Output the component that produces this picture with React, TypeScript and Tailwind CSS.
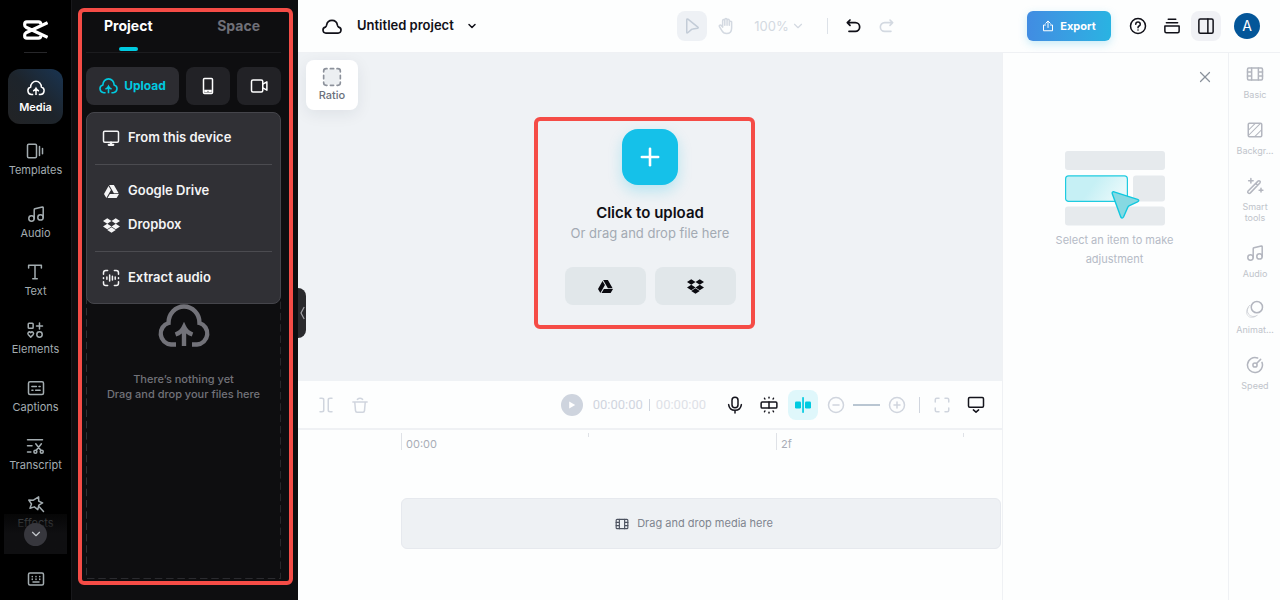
import React from "react";
import { FaDropbox, FaGoogleDrive } from "react-icons/fa";
import { ChevronDown, Plus, X } from "lucide-react";

type IconProps = { className?: string; children: React.ReactNode; sw?: number };

function Icon({ className = "size-5", children, sw = 2 }: IconProps) {
  return (
    <svg
      viewBox="0 0 24 24"
      className={className}
      fill="none"
      stroke="currentColor"
      strokeWidth={sw}
      strokeLinecap="round"
      strokeLinejoin="round"
      aria-hidden="true"
    >
      {children}
    </svg>
  );
}

function CloudUpload({ className }: { className: string }) {
  return (
    <svg viewBox="0 0 52 44" className={className} fill="none" stroke="currentColor" strokeWidth="4.4" aria-hidden="true">
      <path d="M18 40.5H13A11 11 0 0 1 10.5 19A15.5 16.5 0 0 1 41.5 19A11 11 0 0 1 39 40.5H34" />
      <path d="M26 42V24M17.5 30.5Q23.5 28.5 26 23Q28.5 28.5 34.5 30.5" />
    </svg>
  );
}

function Logo() {
  return (
    <svg viewBox="0 0 25 20" className="h-5 w-[25px]" fill="none" stroke="#fff" strokeWidth="3.2" aria-hidden="true">
      <path d="M24.6 2.6L3 12.8Q1.7 13.5 1.7 15V16Q1.7 18.2 3.8 18.2H15.5Q17.7 18.2 17.9 15.6" />
      <path d="M24.6 17.4L3 7.2Q1.7 6.5 1.7 5V4Q1.7 1.8 3.8 1.8H15.5Q17.7 1.8 17.9 4.4" />
    </svg>
  );
}

const Music = ({ className }: { className?: string }) => (
  <Icon className={className}>
    <circle cx="6" cy="18" r="3.6" />
    <circle cx="18" cy="16.5" r="3.6" />
    <path d="M9.6 18V6.4Q9.6 5.4 10.6 5.1L20.4 2.6Q21.6 2.4 21.6 3.5V16.5" />
  </Icon>
);

const Film = ({ className }: { className?: string }) => (
  <Icon className={className}>
    <rect x="2" y="4" width="20" height="16" rx="1.6" />
    <path d="M7.5 4V20M16.5 4V20M2 9.3H7.5M2 14.7H7.5M16.5 9.3H22M16.5 14.7H22" />
  </Icon>
);

const navItems = [
  {
    label: "Templates",
    gap: "mt-[17px]",
    icon: (
      <Icon>
        <rect x="2" y="3" width="12" height="18" rx="1.6" />
        <path d="M18 6V18M22 8.5V15.5" />
      </Icon>
    ),
  },
  { label: "Audio", gap: "mt-[25px]", icon: <Music className="size-5" /> },
  {
    label: "Text",
    gap: "mt-5",
    icon: (
      <Icon>
        <path d="M3.5 6.5V3H20.5V6.5M12 3V21M9 21H15" />
      </Icon>
    ),
  },
  {
    label: "Elements",
    gap: "mt-5",
    icon: (
      <Icon>
        <rect x="3" y="3" width="6.5" height="6.5" rx="1" />
        <path d="M18 2.5V10.5M14 6.5H22M6.3 21.5L3.2 18.4Q1.8 16.6 3.2 15.1Q4.8 13.8 6.3 15.6Q7.8 13.8 9.4 15.1Q10.8 16.6 9.4 18.4Z" />
        <circle cx="18" cy="18" r="3.6" />
      </Icon>
    ),
  },
  {
    label: "Captions",
    gap: "mt-5",
    icon: (
      <Icon>
        <rect x="2" y="3.5" width="20" height="17" rx="2" />
        <path d="M6.5 10H12.5M16 10H17.5M6.5 15H8M11.5 15H17.5" />
      </Icon>
    ),
  },
  {
    label: "Transcript",
    gap: "mt-5",
    icon: (
      <Icon>
        <path d="M2 3.5H22M2 11.5H8M2 20H6.5M13 9L20 18M20.5 9L13.5 18" />
        <circle cx="12.5" cy="19.5" r="2" />
        <circle cx="21" cy="19.5" r="2" />
      </Icon>
    ),
  },
  {
    label: "Effects",
    gap: "mt-5",
    icon: (
      <Icon>
        <path d="M15.5 2.5L15.6 8.2L20.8 10.6L15.8 13.4L14.4 19.5L9.8 15.8L4 17.6L6 12L2.4 6.8L8.6 6.9ZM16.5 16L22 22" />
      </Icon>
    ),
  },
];

function NavRail() {
  return (
    <nav className="flex w-[71px] shrink-0 flex-col bg-black text-[#a3acb0]">
      <div className="relative min-h-0 flex-1">
        <div className="flex h-full flex-col items-center overflow-hidden pt-5">
          <Logo />
          <div className="mt-3 h-px w-[23px] shrink-0 bg-[#27272a]" />
          <button className="mt-4 flex h-[55px] w-[55px] shrink-0 flex-col items-center justify-center rounded-xl bg-linear-to-bl from-[#183452] via-[#1d242b] to-[#222325] pt-0.5 text-white">
            <CloudUpload className="h-4 w-[18px]" />
            <span className="mt-0.5 text-[11px] leading-[18px] font-semibold">Media</span>
          </button>
          {navItems.map((n) => (
            <button key={n.label} className={`flex shrink-0 flex-col items-center ${n.gap}`}>
              <span className="flex h-5 items-center justify-center [&>svg]:size-[18px]">{n.icon}</span>
              <span className="text-[11px] leading-[18px]">{n.label}</span>
            </button>
          ))}
        </div>
        <div className="absolute right-1 bottom-0 left-1 flex h-10 items-center justify-center bg-linear-to-b from-[#0a0a0b]/60 to-[#0f0f11] to-50%">
          <button aria-label="Show more" className="flex size-[23px] items-center justify-center rounded-full bg-[#37373d] text-[#c5c8cc]">
            <ChevronDown className="size-3.5" />
          </button>
        </div>
      </div>
      <div className="flex h-[46px] shrink-0 items-center justify-center pt-1">
        <button aria-label="Keyboard shortcuts">
          <Icon className="size-[18px]">
            <rect x="2" y="4" width="20" height="16" rx="2" />
            <path d="M7 8.5V9M12 8.5V9M17 8.5V9M7 12V12.5M12 12V12.5M17 12V12.5M8 16H16" />
          </Icon>
        </button>
      </div>
    </nav>
  );
}

function MenuItem({ icon, label }: { icon: React.ReactNode; label: string }) {
  return (
    <button role="menuitem" className="flex h-[34px] w-full items-center gap-2 px-[15px] text-[13px] font-semibold text-[#f4f4f5]">
      <span className="flex w-[18px] justify-center">{icon}</span>
      {label}
    </button>
  );
}

function MediaPanel() {
  return (
    <aside className="relative flex w-[227px] shrink-0 flex-col border-l border-[#18181b] bg-[#0e0e10] pr-[17px] pb-[21px] pl-[14px]">
      <div role="tablist" className="flex h-[53px] shrink-0 justify-between border-b border-[#1c1c1f] pr-[21px] pl-[18px] text-sm font-bold">
        <button role="tab" aria-selected="true" className="flex flex-col items-center pt-4 text-white">
          <span className="leading-5">Project</span>
          <span className="mt-[11px] h-1 w-[19px] rounded-sm bg-[#00cae0]" />
        </button>
        <button role="tab" aria-selected="false" className="flex flex-col pt-4 leading-5 text-[#707078]">Space</button>
      </div>
      <div className="relative flex min-h-0 flex-1 flex-col pt-[14px]">
        <div className="flex h-[38px] shrink-0 gap-[7px]">
          <button className="flex w-[93px] items-center justify-center gap-1.5 rounded-lg bg-[#2c2c31] text-[12px] font-bold text-[#00cae0]">
            <CloudUpload className="h-4 w-[19px]" />
            Upload
          </button>
          <button aria-label="Upload from phone" className="flex flex-1 items-center justify-center rounded-lg bg-[#222226] text-white">
            <Icon className="size-[18px]">
              <rect x="6" y="2" width="12" height="20" rx="1.4" />
              <path d="M7 18.8H17" strokeWidth="3.6" strokeLinecap="butt" />
              <circle cx="12" cy="19" r=".8" fill="#222226" stroke="none" />
            </Icon>
          </button>
          <button aria-label="Record" className="flex flex-1 items-center justify-center rounded-lg bg-[#222226] text-white">
            <Icon className="size-[18px]">
              <rect x="2" y="4" width="15" height="16" rx="2" />
              <path d="M17 9.5L22.5 6.5V17.5L17 14.5" />
            </Icon>
          </button>
        </div>
        <div className="relative flex-1">
          <div className="absolute inset-x-0 top-10 bottom-0">
            <svg className="size-full" aria-hidden="true">
              <rect x="0.5" y="0.5" width="99.6%" height="99.8%" fill="none" stroke="#303034" strokeDasharray="7.5 3.8" />
            </svg>
          </div>
          <div className="flex flex-col items-center pt-[199px] text-center text-[11px] leading-[15px] font-medium text-[#727279]">
            <CloudUpload className="h-11 w-[52px]" />
            <p className="mt-6">There’s nothing yet</p>
            <p>Drag and drop your files here</p>
          </div>
        </div>
        <div role="menu" className="absolute inset-x-0 top-[59px] rounded-lg border border-[#45454b] bg-[#303035] py-2">
          <MenuItem
            label="From this device"
            icon={
              <Icon className="size-[18px]">
                <rect x="2" y="3" width="20" height="14.5" rx="1.6" />
                <path d="M9 21H15M12 18V21" strokeWidth="3" />
              </Icon>
            }
          />
          <hr className="mx-2 my-[9px] border-[#4b4b50]" />
          <MenuItem label="Google Drive" icon={<FaGoogleDrive className="size-[15px]" />} />
          <MenuItem label="Dropbox" icon={<FaDropbox className="size-[17px]" />} />
          <hr className="mx-2 my-[9px] border-[#4b4b50]" />
          <MenuItem
            label="Extract audio"
            icon={
              <Icon className="size-[18px]">
                <path d="M2 7V5Q2 2 5 2H7.5M16.5 2H19Q22 2 22 5V7M22 17V19Q22 22 19 22H16.5M7.5 22H5Q2 22 2 19V17M2 11.5V12.5M22 11.5V12.5M6.5 10.5V13.5M10.2 8V16M13.9 9.5V14.5M17.6 10.5V13.5" />
              </Icon>
            }
          />
        </div>
      </div>
      <div className="pointer-events-none absolute top-2 right-[5px] bottom-[15px] left-[6px] rounded-md border-4 border-[#f54c46]" />
      <button aria-label="Collapse panel" className="absolute top-[288px] -right-2 z-10 flex h-[50px] w-2 items-center justify-center rounded-r-lg bg-[#2a2a2d] text-[#a1a1a6]">
        <svg viewBox="0 0 5 14" className="h-3.5 w-[5px]" fill="none" stroke="currentColor" strokeWidth="1.2" aria-hidden="true">
          <path d="M4.2 1L1 7L4.2 13" />
        </svg>
      </button>
    </aside>
  );
}

function Header() {
  return (
    <header className="grid h-[53px] shrink-0 grid-cols-[1fr_auto_1fr] items-center border-b border-[#eff1f4] bg-[#fdfefe] pr-5 pl-6 text-[#101018]">
      <div className="flex items-center">
        <Icon className="size-5">
          <path d="M5 20.5H19A3.6 3.6 0 0 0 20 13.4Q18.9 12.8 18.5 11A6.6 7 0 0 0 5.5 11Q5.1 12.8 4 13.4A3.6 3.6 0 0 0 5 20.5Z" />
        </Icon>
        <button className="ml-[15px] flex items-center gap-3 text-[13px] font-semibold">
          Untitled project
          <ChevronDown className="size-3" strokeWidth={3} />
        </button>
      </div>
      <div className="mr-2 flex items-center text-[#d3d9e1]">
        <button aria-label="Select" className="flex size-[30px] items-center justify-center rounded-lg bg-[#eef1f5] text-[#c3ccd7]">
          <Icon className="size-[18px]">
            <path d="M5 3.5V20.5Q5.2 21.8 6.3 21L11.5 16.5Q12 16 13 15.9L19.5 15Q21 14.6 19.8 13.5L6.6 2.8Q5.2 2 5 3.5Z" />
          </Icon>
        </button>
        <button aria-label="Hand" className="ml-[9px] flex size-5 items-center justify-center">
          <Icon className="size-[18px]">
            <path d="M7.5 13.5V5Q7.5 3.4 8.9 3.4T10.4 5V11V3.5Q10.4 2 11.9 2T13.4 3.5V11V4.5Q13.4 3 14.9 3T16.4 4.5V11V7Q16.4 5.5 18 5.5T19.5 7V14.5Q19.5 22 12.8 22Q8.5 22 6.7 18.5L3.2 12.8Q2.6 11.4 3.7 10.9Q4.9 10.3 6 11.6Z" />
          </Icon>
        </button>
        <button className="ml-[18px] flex items-center gap-0.5 text-[13px] leading-5">
          100%
          <ChevronDown className="size-[14px]" />
        </button>
        <span className="mr-[15px] ml-[22px] h-4 w-px bg-[#dde2e8]" />
        <button aria-label="Undo" className="flex size-5 items-center justify-center text-[#101018]">
          <Icon className="size-4" sw={2.6}>
            <path d="M7.5 3L3.5 7L7.5 11M4 7H15.5A6.5 6.5 0 0 1 15.5 20H6" />
          </Icon>
        </button>
        <button aria-label="Redo" className="ml-[14px] flex size-5 items-center justify-center">
          <Icon className="size-4" sw={2.4}>
            <path d="M16.5 3L20.5 7L16.5 11M20 7H8.5A6.5 6.5 0 0 0 8.5 20H18" />
          </Icon>
        </button>
      </div>
      <div className="flex items-center justify-end">
        <button className="flex h-[30px] w-[84px] items-center justify-center gap-1.5 rounded-md bg-linear-to-r from-[#418ce2] to-[#29b3e2] text-[11px] font-bold text-white shadow-[0_3px_8px_rgba(41,179,226,0.25)]">
          <Icon className="size-3">
            <path d="M12 15V2.5M7.5 6.5L12 2L16.5 6.5M7 10H3V21.5H21V10H17" />
          </Icon>
          Export
        </button>
        <button aria-label="Help" className="ml-[18px]">
          <Icon className="size-[18px]">
            <circle cx="12" cy="12" r="10" />
            <path d="M9 9.6Q9.2 6.8 12 6.8T15 9.5Q15 11 13.4 12Q12 12.9 12 14.2M12 17.2V17.4" />
          </Icon>
        </button>
        <button aria-label="Tasks" className="ml-4">
          <Icon className="size-[18px]">
            <path d="M7 3H17M4.5 7.5H19.5M2.5 12H21.5V19Q21.5 21 19.5 21H4.5Q2.5 21 2.5 19Z" />
          </Icon>
        </button>
        <button aria-label="Toggle side panel" className="ml-[10px] flex size-[30px] items-center justify-center rounded-lg bg-[#f0f1f5]">
          <Icon className="size-[18px]">
            <rect x="2.5" y="2.5" width="19" height="19" rx="2" />
            <path d="M14.5 2.5V21.5" />
          </Icon>
        </button>
        <button aria-label="Account" className="ml-[13px] flex size-[26px] items-center justify-center rounded-full bg-[#045699] text-sm text-white">
          A
        </button>
      </div>
    </header>
  );
}

function Stage() {
  return (
    <section className="relative flex min-h-0 flex-1 justify-center bg-[#eff2f5]">
      <button className="absolute top-[7px] left-2 flex h-[50px] w-[52px] flex-col items-center rounded-lg bg-white pt-[7px] text-[11px] leading-[17px] font-medium text-[#6b6f7b] shadow-[0_4px_16px_rgba(30,40,60,0.08)]">
        <Icon className="size-5">
          <rect x="3" y="3" width="18" height="18" rx="2" fill="#eceff2" stroke="none" />
          <path
            d="M2 6V5Q2 2 5 2H6M18 2H19Q22 2 22 5V6M22 18V19Q22 22 19 22H18M6 22H5Q2 22 2 19V18M10 2H14M10 22H14M2 10V14M22 10V14"
            stroke="#8c919b"
          />
        </Icon>
        Ratio
      </button>
      <div className="relative mt-[76px] flex h-fit flex-col items-center">
        <button aria-label="Click to upload" className="flex size-14 items-center justify-center rounded-2xl bg-[#15c1e9] text-white shadow-[0_6px_14px_rgba(21,193,233,0.25)]">
          <Plus className="size-7" strokeWidth={2.2} />
        </button>
        <p className="mt-[18px] text-[15px] leading-5 font-semibold text-[#0e0e14]">Click to upload</p>
        <p className="text-[13px] leading-5 text-[#a3aab3]">Or drag and drop file here</p>
        <div className="mt-6 flex gap-[9px] text-[#0a0a10]">
          <button aria-label="Google Drive" className="flex h-[38px] w-[81px] items-center justify-center rounded-lg bg-[#e1e7ea]">
            <FaGoogleDrive className="size-[15px]" />
          </button>
          <button aria-label="Dropbox" className="flex h-[38px] w-[81px] items-center justify-center rounded-lg bg-[#e1e7ea]">
            <FaDropbox className="size-[17px]" />
          </button>
        </div>
        <div className="pointer-events-none absolute -top-3 -right-[19px] -bottom-6 -left-[31px] rounded-md border-4 border-[#f54c46]" />
      </div>
    </section>
  );
}

function PlaybackBar() {
  return (
    <div className="flex h-[49px] shrink-0 items-center justify-between border-b-2 border-[#eff1f4] pt-px pr-[17px] pl-[18px] text-[#d0d5de]">
      <div className="flex items-center gap-[14px]">
        <button aria-label="Split" className="flex size-5 items-center justify-center">
          <Icon className="size-[18px]">
            <path d="M4 3H6.5Q9 3 9 5V19Q9 21 6.5 21H4M20 3H17.5Q15 3 15 5V19Q15 21 17.5 21H20" />
          </Icon>
        </button>
        <button aria-label="Delete" className="flex size-5 items-center justify-center">
          <Icon className="size-[18px]">
            <path d="M2.5 8H21.5M5 8L6 19.5Q6.2 21.5 8 21.5H16Q17.8 21.5 18 19.5L19 8M8.5 4.5Q12 1.5 15.5 4.5" />
          </Icon>
        </button>
      </div>
      <div className="flex items-center">
        <button aria-label="Play" className="flex size-[22px] items-center justify-center rounded-full bg-[#ced4de]">
          <svg viewBox="0 0 8 8" className="size-2" aria-hidden="true">
            <path d="M1.2 .6L7.2 4L1.2 7.4Z" fill="#fff" />
          </svg>
        </button>
        <span className="ml-[10px] flex items-center gap-1.5 font-[Roboto,'Liberation_Sans',sans-serif] text-[13px]">
          <span>00:00:00</span>
          <span className="h-3 w-px bg-[#ced4de]" />
          <span className="text-[#dde1e7]">00:00:00</span>
        </span>
        <button aria-label="Record voice" className="ml-5 text-[#14141c]">
          <Icon className="size-[18px]">
            <rect x="8" y="1.5" width="8" height="14" rx="4" />
            <path d="M3.5 11.5Q4.5 19 12 19T20.5 11.5M12 19V22.5" />
          </Icon>
        </button>
        <button aria-label="Split scenes" className="ml-4 text-[#14141c]">
          <Icon className="size-[18px]">
            <rect x="1.5" y="8" width="21" height="8" rx="1.5" />
            <path d="M12 8V16M12 1.5V2.5M12 21.5V22.5M6 3L6.5 4M18 3L17.5 4M6 21L6.5 20M18 21L17.5 20" />
          </Icon>
        </button>
        <button aria-label="Auto snapping" className="ml-[10px] flex size-[30px] items-center justify-center rounded-lg bg-[#dff7fb] text-[#00cae0]">
          <svg viewBox="0 0 18 18" className="size-[18px]" fill="currentColor" aria-hidden="true">
            <rect x="1" y="5.5" width="6" height="7" rx="1.2" />
            <rect x="11" y="5.5" width="6" height="7" rx="1.2" />
            <rect x="8.2" y="1" width="1.7" height="16" rx=".8" />
          </svg>
        </button>
        <button aria-label="Zoom out" className="ml-[9px]">
          <Icon className="size-[18px]">
            <circle cx="12" cy="12" r="10" />
            <path d="M8 12H16" />
          </Icon>
        </button>
        <span className="mx-2 h-0.5 w-[27px] bg-[#b9c6d2]" />
        <button aria-label="Zoom in">
          <Icon className="size-[18px]">
            <circle cx="12" cy="12" r="10" />
            <path d="M8 12H16M12 8V16" />
          </Icon>
        </button>
        <span className="mx-[13px] h-4 w-px bg-[#d0d5de]" />
        <button aria-label="Fit timeline">
          <Icon className="size-[18px]">
            <path d="M3 8V5Q3 3 5 3H8M16 3H19Q21 3 21 5V8M21 16V19Q21 21 19 21H16M8 21H5Q3 21 3 19V16" />
          </Icon>
        </button>
        <button aria-label="Preview settings" className="ml-4 text-[#14141c]">
          <Icon className="size-[18px]">
            <rect x="2" y="2" width="20" height="13" rx="1.6" />
            <path d="M8.5 18.5L12 21.5L15.5 18.5" />
          </Icon>
        </button>
      </div>
    </div>
  );
}

const ticks = ["00:00", "", "2f", ""];

function Timeline() {
  return (
    <section className="h-[219px] shrink-0 bg-[#fdfefe]">
      <PlaybackBar />
      <div className="pt-[3px] pl-[103px]">
        <div className="flex text-[11px] text-[#a8adb7]">
          {ticks.map((t, i) => (
            <div
              key={i}
              className={
                i === 3
                  ? "h-1 flex-1 border-l border-[#dfe2e7]"
                  : t
                    ? "h-[17px] w-[187px] border-l border-[#dfe2e7] pl-1 leading-[22px]"
                    : "h-1 w-[188px] border-l border-[#dfe2e7]"
              }
            >
              {t}
            </div>
          ))}
        </div>
        <div className="mt-12 mr-px flex h-[51px] items-center justify-center gap-2 rounded-md border border-[#e6e9ee] bg-[#eef1f4] pr-[14px] text-[11px] text-[#7f858f]">
          <Film className="size-[14px] text-[#4d5360]" />
          Drag and drop media here
        </div>
      </div>
    </section>
  );
}

const tools = [
  { label: "Basic", icon: <Film className="size-[18px]" /> },
  {
    label: "Backgr…",
    icon: (
      <Icon className="size-[18px]">
        <rect x="3" y="3" width="18" height="18" rx="1.6" />
        <path d="M3.5 12L12 3.5M3.5 19L19 3.5M12 20.5L20.5 12" strokeWidth="1.4" />
      </Icon>
    ),
  },
  {
    label: "Smart tools",
    icon: (
      <Icon className="size-[18px]">
        <path d="M2.5 19L16 5.5Q17.3 4.5 18.5 5.5T18.5 8L5.5 21.5Q4.2 22.3 3 21.3T2.5 19ZM13 8.5L15.5 11M6.5 2V8M3.5 5H9.5M20 15V20M17.5 17.5H22.5" />
      </Icon>
    ),
  },
  { label: "Audio", icon: <Music className="size-[18px]" /> },
  {
    label: "Animat…",
    icon: (
      <Icon className="size-[18px]">
        <path d="M5 7A8 8 0 1 0 15 20.5" strokeWidth="1.3" opacity=".6" />
        <path d="M3.5 10A7 7 0 0 0 12.5 22" strokeWidth="1.3" opacity=".4" />
        <circle cx="14.5" cy="9.5" r="7.5" />
      </Icon>
    ),
  },
  {
    label: "Speed",
    icon: (
      <Icon className="size-[18px]">
        <path d="M15.5 2.7A10 10 0 1 0 21.3 8.5M14 10L19.5 4.5" />
        <circle cx="12" cy="12" r="2.8" />
      </Icon>
    ),
  },
];

function Inspector() {
  return (
    <aside className="flex w-[226px] shrink-0 flex-col border-l border-[#eff1f4]">
      <button aria-label="Close" className="mt-[15px] mr-[14px] self-end text-[#8a929c]">
        <X className="size-[18px]" strokeWidth={1.6} />
      </button>
      <div className="mt-[65px] flex flex-col items-center pr-0.5">
        <svg viewBox="0 0 100 75" className="h-[75px] w-[100px]" aria-hidden="true">
          <defs>
            <linearGradient id="card" x1="0" y1="0" x2="1" y2="0.3">
              <stop offset="0.5" stopColor="#c6f0f5" />
              <stop offset="1" stopColor="#e6f8fa" />
            </linearGradient>
          </defs>
          <rect x="0" y="0" width="100" height="19" rx="3" fill="#e6eaed" />
          <rect x="68" y="24.5" width="32" height="26" rx="3" fill="#e6eaed" />
          <rect x="0" y="55.5" width="100" height="19" rx="3" fill="#e6eaed" />
          <rect x=".6" y="24.9" width="61.8" height="25.5" rx="3" fill="url(#card)" stroke="#1ecbe0" strokeWidth="1.2" />
          <path
            d="M49 40.8L72.5 48.4Q75 49.5 72.5 50.9L64.5 54.6Q63.3 55.2 62.8 56.2L58.5 66Q57.2 68.2 55.8 66L47.2 42.5Q47 40.3 49 40.8Z"
            fill="#86d9e2"
            stroke="#12c8df"
            strokeWidth="1.4"
            strokeLinejoin="round"
          />
        </svg>
        <p className="mt-[5px] w-32 text-center text-[11px] leading-[19px] text-[#b5bbc6]">Select an item to make adjustment</p>
      </div>
    </aside>
  );
}

function ToolRail() {
  return (
    <nav className="flex w-[52px] shrink-0 flex-col items-center gap-[21px] border-l border-[#eff1f4] pt-3 pl-px text-[#b3b6bf]">
      {tools.map((t) => (
        <button key={t.label} className="flex w-[42px] flex-col items-center">
          {t.icon}
          <span className="mt-1.5 text-[9px] leading-[11px] text-[#c0c4cb]">{t.label}</span>
        </button>
      ))}
    </nav>
  );
}

export default function App() {
  return (
    <div className="flex h-screen overflow-hidden bg-[#fdfefe] font-[Inter,'Liberation_Sans',sans-serif]">
      <NavRail />
      <MediaPanel />
      <div className="flex min-w-0 flex-1 flex-col">
        <Header />
        <div className="flex min-h-0 flex-1">
          <main className="flex min-w-0 flex-1 flex-col">
            <Stage />
            <Timeline />
          </main>
          <Inspector />
          <ToolRail />
        </div>
      </div>
    </div>
  );
}
